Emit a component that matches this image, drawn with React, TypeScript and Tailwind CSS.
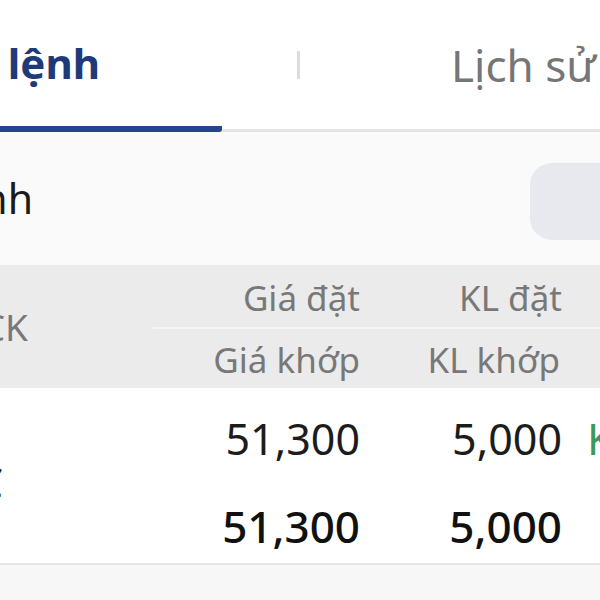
import React from "react";

export default function App() {
  const font = { fontFamily: '"Noto Sans", "Open Sans", sans-serif' };
  return (
    <div className="w-[600px] h-[600px] overflow-hidden bg-white flex flex-col" style={font}>
      {/* Tabs */}
      <div className="flex h-[132px] shrink-0 border-b-[3px] border-[#e4e4e4]">
        <div className="w-[222px] h-[132px] shrink-0 border-b-[6px] border-[#27448e] rounded-br-[3px] flex items-center">
          <div className="w-[100px] flex justify-end">
            <span className="whitespace-nowrap text-[42px] font-bold text-[#1f3a78] leading-none">Sổ lệnh</span>
          </div>
        </div>
        <div className="flex-1 flex items-center">
          <div className="w-[3px] h-[28px] bg-[#dcdcdc] ml-[75px]"></div>
          <span className="ml-[151px] whitespace-nowrap text-[44px] text-[#767676] leading-none">Lịch sử lệnh</span>
        </div>
      </div>

      {/* Filter row */}
      <div className="h-[133px] shrink-0 bg-[#fafafa] flex items-center">
        <div className="w-[33px] shrink-0 flex justify-end">
          <span className="whitespace-nowrap text-[41px] text-[#1a1a1a] leading-none">Tất cả lệnh</span>
        </div>
        <div className="ml-[497px] mt-[6px] w-[120px] h-[77px] shrink-0 rounded-[22px] bg-[#e8e9ef]"></div>
      </div>

      {/* Header */}
      <div className="h-[123px] shrink-0 bg-[#ebebeb] flex items-center">
        <div className="w-[28px] shrink-0 flex justify-end">
          <span className="whitespace-nowrap text-[37px] text-[#787878] leading-none">Mã CK</span>
        </div>
        <div className="flex-1 h-full flex flex-col ml-[125px]">
          <div className="flex-1 flex items-center pt-[4px] border-b-[2px] border-[#f3f3f3]">
            <div className="w-[207px] text-right text-[35px] text-[#787878] leading-none">Giá đặt</div>
            <div className="w-[202px] text-right text-[35px] text-[#787878] leading-none">KL đặt</div>
          </div>
          <div className="flex-1 flex items-center pt-[2px]">
            <div className="w-[207px] text-right text-[35px] text-[#787878] leading-none">Giá khớp</div>
            <div className="w-[200px] text-right text-[35px] text-[#787878] leading-none">KL khớp</div>
          </div>
        </div>
      </div>

      {/* Data row */}
      <div className="h-[177px] shrink-0 bg-white flex items-center border-b-[2px] border-[#e6e6e6]">
        <div className="w-[3px] shrink-0 flex justify-end mt-[12px]">
          <span className="whitespace-nowrap text-[42px] text-[#1a1a1a] leading-none">MBC</span>
        </div>
        <div className="flex-1 h-full flex flex-col ml-[150px]">
          <div className="h-[100px] flex items-center">
            <div className="w-[207px] text-right text-[43px] text-[#1c1c1c] leading-none">51,300</div>
            <div className="w-[202px] text-right text-[43px] text-[#1c1c1c] leading-none">5,000</div>
            <div className="ml-[25px] whitespace-nowrap text-[43px] text-[#3a9a5c] leading-none">Khớp hết</div>
          </div>
          <div className="flex-1 flex items-center">
            <div className="w-[207px] text-right text-[44px] font-medium text-[#111] leading-none">51,300</div>
            <div className="w-[202px] text-right text-[44px] font-medium text-[#111] leading-none">5,000</div>
          </div>
        </div>
      </div>

      {/* Next row */}
      <div className="flex-1 bg-[#f7f7f7]"></div>
    </div>
  );
}
